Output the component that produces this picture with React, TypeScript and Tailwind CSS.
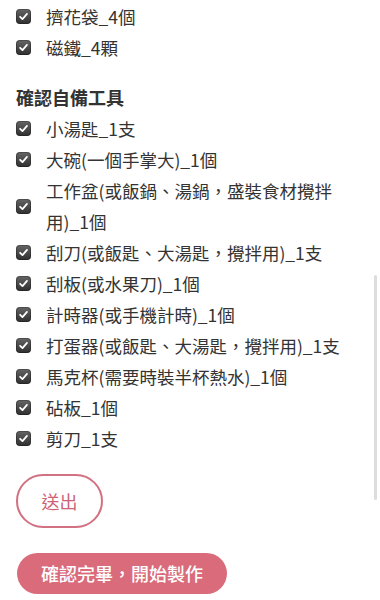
import React from "react";

const font = { fontFamily: '"Noto Sans CJK TC", "Noto Sans", sans-serif' };

function Check() {
  return (
    <span className="flex h-[15px] w-[15px] shrink-0 items-center justify-center rounded-[4px] bg-gradient-to-b from-[#666666] to-[#303030] shadow-[inset_0_0_0_1px_rgba(0,0,0,0.25)]">
      <svg width="11" height="11" viewBox="0 0 12 12" fill="none">
        <path d="M2.3 6.3 L4.9 8.9 L9.8 3.2" stroke="white" strokeWidth="1.9" strokeLinecap="round" strokeLinejoin="round" />
      </svg>
    </span>
  );
}

function Item({ text }: { text: string }) {
  return (
    <div className="flex items-center gap-[15px]">
      <Check />
      <span className="flex-1 text-[17.5px] leading-[31px] text-[#333333]">{text}</span>
    </div>
  );
}

const top = ["擠花袋_4個", "磁鐵_4顆"];
const tools = [
  "小湯匙_1支",
  "大碗(一個手掌大)_1個",
  "工作盆(或飯鍋、湯鍋，盛裝食材攪拌用)_1個",
  "刮刀(或飯匙、大湯匙，攪拌用)_1支",
  "刮板(或水果刀)_1個",
  "計時器(或手機計時)_1個",
  "打蛋器(或飯匙、大湯匙，攪拌用)_1支",
  "馬克杯(需要時裝半杯熱水)_1個",
  "砧板_1個",
  "剪刀_1支",
];

export default function App() {
  return (
    <div className="relative h-[600px] w-[380px] overflow-hidden bg-white" style={font}>
      <div className="flex flex-col pl-[16px] pr-[33px] pt-[1px]">
        {top.map((t) => (
          <Item key={t} text={t} />
        ))}
        <div className="mt-[19px] text-[18px] font-bold leading-[31px] text-[#333333]">確認自備工具</div>
        {tools.map((t) => (
          <Item key={t} text={t} />
        ))}
        <div className="mt-[20px] flex">
          <button className="flex h-[54px] w-[87px] items-center justify-center rounded-full border-2 border-[#d27181] text-[18px] text-[#cc6376]">
            送出
          </button>
        </div>
        <div className="mt-[25px] flex pl-[1px]">
          <button className="flex h-[41px] w-[210px] items-center justify-center rounded-full bg-[#d96b7b] text-[18px] font-medium text-white">
            確認完畢，開始製作
          </button>
        </div>
      </div>
      <div className="absolute left-[374px] top-[275px] h-[225px] w-[3px] rounded-full bg-[#dddddd]" />
    </div>
  );
}
